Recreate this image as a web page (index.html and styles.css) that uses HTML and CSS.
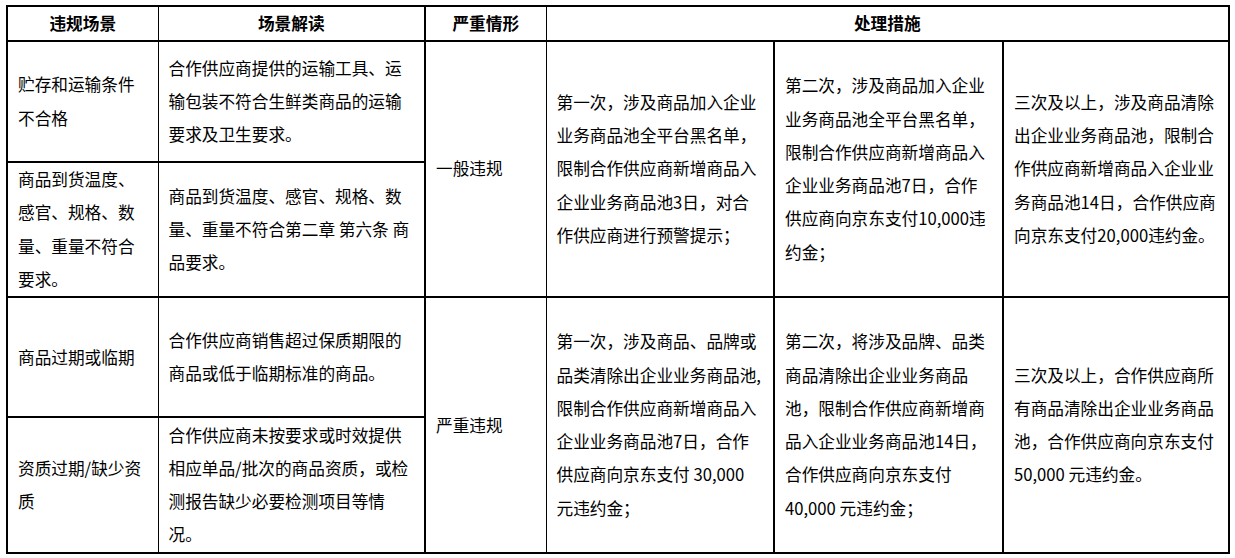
FILE: index.html
```html
<!DOCTYPE html>
<html lang="zh-CN">
<head>
<meta charset="utf-8">
<title>违规场景处理措施</title>
<link rel="stylesheet" href="styles.css">
</head>
<body>
<table class="rules">
  <colgroup>
    <col class="c1"><col class="c2"><col class="c3"><col class="c4"><col class="c5"><col class="c6">
  </colgroup>
  <thead>
    <tr class="head">
      <th class="b-r1">违规场景</th>
      <th class="b-r2">场景解读</th>
      <th class="b-r1">严重情形</th>
      <th colspan="3">处理措施</th>
    </tr>
  </thead>
  <tbody>
    <tr class="r1">
      <td class="b-r1">贮存和运输条件<br>不合格</td>
      <td class="b-r2">合作供应商提供的运输工具、运<br>输包装不符合生鲜类商品的运输<br>要求及卫生要求。</td>
      <td rowspan="2" class="b-r1">一般违规</td>
      <td rowspan="2" class="b-r2 measure">第一次，涉及商品加入企业<br>业务商品池全平台黑名单，<br>限制合作供应商新增商品入<br>企业业务商品池3日，对合<br>作供应商进行预警提示；</td>
      <td rowspan="2" class="b-r2 measure m5">第二次，涉及商品加入企业<br>业务商品池全平台黑名单，<br>限制合作供应商新增商品入<br>企业业务商品池7日，合作<br>供应商向京东支付10,000违<br>约金；</td>
      <td rowspan="2" class="measure">三次及以上，涉及商品清除<br>出企业业务商品池，限制合<br>作供应商新增商品入企业业<br>务商品池14日，合作供应商<br>向京东支付20,000违约金。</td>
    </tr>
    <tr class="r2">
      <td class="b-r1">商品到货温度、<br>感官、规格、数<br>量、重量不符合<br>要求。</td>
      <td class="b-r2">商品到货温度、感官、规格、数<br>量、重量不符合第二章 第六条 商<br>品要求。</td>
    </tr>
    <tr class="r3">
      <td class="b-r1">商品过期或临期</td>
      <td class="b-r2">合作供应商销售超过保质期限的<br>商品或低于临期标准的商品。</td>
      <td rowspan="2" class="b-r1">严重违规</td>
      <td rowspan="2" class="b-r2 measure">第一次，涉及商品、品牌或<br>品类清除出企业业务商品池,<br>限制合作供应商新增商品入<br>企业业务商品池7日，合作<br>供应商向京东支付 30,000<br>元违约金；</td>
      <td rowspan="2" class="b-r2 measure m5">第二次，将涉及品牌、品类<br>商品清除出企业业务商品<br>池，限制合作供应商新增商<br>品入企业业务商品池14日，<br>合作供应商向京东支付<br>40,000 元违约金；</td>
      <td rowspan="2" class="measure">三次及以上，合作供应商所<br>有商品清除出企业业务商品<br>池，合作供应商向京东支付<br>50,000 元违约金。</td>
    </tr>
    <tr class="r4">
      <td class="b-r1">资质过期/缺少资<br>质</td>
      <td class="b-r2">合作供应商未按要求或时效提供<br>相应单品/批次的商品资质，或检<br>测报告缺少必要检测项目等情<br>况。</td>
    </tr>
  </tbody>
</table>
</body>
</html>
```
FILE: styles.css
```css
html, body {
  margin: 0;
  padding: 0;
  background: #ffffff;
}

body {
  padding: 5px 0 0 6px;
  font-family: "Noto Sans CJK SC", "Microsoft YaHei", "Noto Sans", sans-serif;
  color: #000000;
}

.rules {
  border-collapse: collapse;
  table-layout: fixed;
  width: 1224px;
  border: 2px solid #000;
  font-size: 16.67px;
  line-height: 33.3px;
}

.c1 { width: 151px; }
.c2 { width: 267px; }
.c3 { width: 121px; }
.c4 { width: 228px; }
.c5 { width: 229px; }
.c6 { width: 226px; }

.rules th,
.rules td {
  border-top: 2px solid #000;
  border-bottom: 2px solid #000;
  padding: 0 6px 0 10px;
  vertical-align: middle;
  text-align: left;
  white-space: nowrap;
}

.rules th {
  font-weight: 700;
  text-align: center;
  line-height: 33px;
  padding: 0;
}

.b-r1 { border-right: 1px solid #000; }
.b-r2 { border-right: 2px solid #000; }

.head { height: 35px; }
.r1 { height: 121px; }
.r2 { height: 135px; }
.r3 { height: 120px; }
.r4 { height: 136px; }

.measure { padding-left: 10px; }
.m5 { padding-left: 11px; }
```
